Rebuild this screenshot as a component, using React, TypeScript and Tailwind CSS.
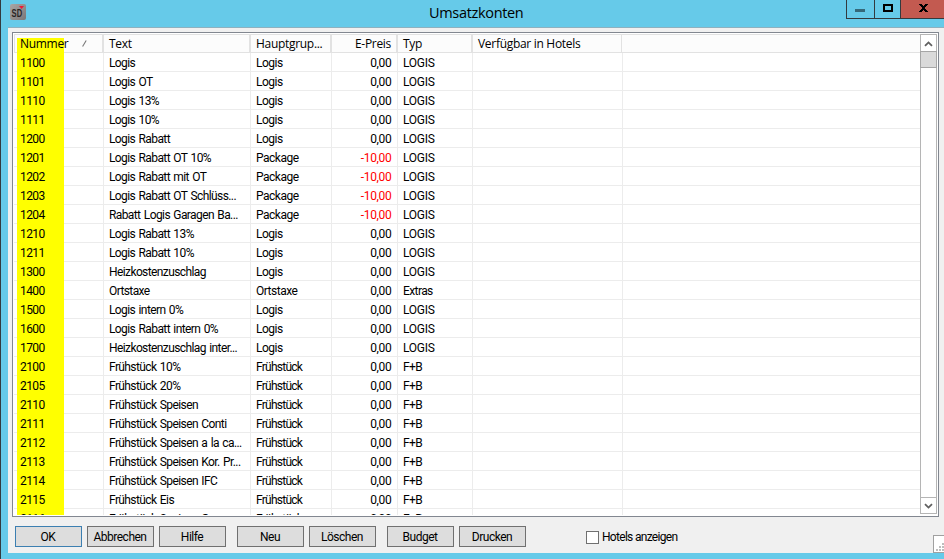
import React from 'react';

type Row = [string, string, string, string, string];

const logis = (nr: string, text: string): Row => [nr, text, 'Logis', '0,00', 'LOGIS'];
const pack = (nr: string, text: string): Row => [nr, text, 'Package', '-10,00', 'LOGIS'];
const food = (nr: string, text: string): Row => [nr, text, 'Frühstück', '0,00', 'F+B'];

const rows: Row[] = [
  logis('1100', 'Logis'),
  logis('1101', 'Logis OT'),
  logis('1110', 'Logis 13%'),
  logis('1111', 'Logis 10%'),
  logis('1200', 'Logis Rabatt'),
  pack('1201', 'Logis Rabatt OT 10%'),
  pack('1202', 'Logis Rabatt mit OT'),
  pack('1203', 'Logis Rabatt OT Schlüss...'),
  pack('1204', 'Rabatt Logis Garagen Ba...'),
  logis('1210', 'Logis Rabatt 13%'),
  logis('1211', 'Logis Rabatt 10%'),
  logis('1300', 'Heizkostenzuschlag'),
  ['1400', 'Ortstaxe', 'Ortstaxe', '0,00', 'Extras'],
  logis('1500', 'Logis intern 0%'),
  logis('1600', 'Logis Rabatt intern 0%'),
  logis('1700', 'Heizkostenzuschlag inter...'),
  food('2100', 'Frühstück 10%'),
  food('2105', 'Frühstück 20%'),
  food('2110', 'Frühstück Speisen'),
  food('2111', 'Frühstück Speisen Conti'),
  food('2112', 'Frühstück Speisen a la ca...'),
  food('2113', 'Frühstück Speisen Kor. Pr...'),
  food('2114', 'Frühstück Speisen IFC'),
  food('2115', 'Frühstück Eis'),
  food('2116', 'Frühstück Speisen G'),
];

const grid = 'grid grid-cols-[90px_147px_81px_66px_75px_150px_1fr]';
const cell = 'border-r border-[#ececec] pl-[5px] whitespace-nowrap overflow-hidden';
const head = 'border-r-2 border-[#e2e2e2] pl-[5px] whitespace-nowrap overflow-hidden';

function Button({ label, primary, className = '' }: { label: string; primary?: boolean; className?: string }) {
  return (
    <button
      className={`h-[21px] w-[67px] border bg-[#dddddd] pr-px text-center leading-[20px] ${
        primary ? 'border-[#3c7fb1]' : 'border-[#707070]'
      } ${className}`}
    >
      {label}
    </button>
  );
}

function Chevron({ down }: { down?: boolean }) {
  return (
    <svg width="9" height="6" viewBox="0 0 9 6" className={down ? 'rotate-180' : ''}>
      <path d="M1 4.8 4.5 1.4 8 4.8" fill="none" stroke="#606060" strokeWidth="1.8" />
    </svg>
  );
}

export default function App() {
  return (
    <div className="relative flex h-[559px] w-[944px] flex-col overflow-hidden border-l border-[#333a3e] bg-[#66cae9] font-['Roboto','Liberation_Sans',sans-serif] text-[12px] tracking-[-0.6px] text-black">
      <header className="flex h-[27px] shrink-0 items-start">
        <svg width="16" height="16" viewBox="0 0 16 16" className="mt-[4px] ml-[9px] shrink-0 tracking-normal">
          <defs>
            <linearGradient id="badge" x1="0" y1="0" x2="1" y2="1">
              <stop offset="0" stopColor="#aaa6a5" />
              <stop offset="1" stopColor="#7b7777" />
            </linearGradient>
          </defs>
          <rect width="16" height="16" rx="2" fill="url(#badge)" />
          <path d="M9 2h5l-2.4 3z" fill="#ed1838" />
          <text x="1.6" y="13.2" fontSize="10" fontWeight="700" fill="#292526" textLength="10.5" lengthAdjust="spacingAndGlyphs" fontFamily="Liberation Sans">
            SD
          </text>
        </svg>
        <h1 className="flex-1 pl-[403px] font-['Open_Sans',sans-serif] text-[14.5px] leading-[26px] tracking-[-0.33px]">Umsatzkonten</h1>
        <div className="flex h-[19px] w-[98px] border-b border-l border-[#333a3e]">
          <div className="flex w-[28px] justify-center border-r border-[#333a3e]">
            <span className="mt-[9px] mr-px h-[3px] w-[10px] bg-[#35697a]" />
          </div>
          <div className="flex w-[26px] justify-center border-r border-[#333a3e]">
            <span className="mt-[4px] h-[8px] w-[10px] border-2 border-black" />
          </div>
          <div className="flex flex-1 justify-center bg-[#c35a50]">
            <svg width="9" height="8" viewBox="0 0 9 8" className="mt-[4px] mr-[-2px]" shapeRendering="crispEdges">
              <path d="M0 0h3v1h1v1h1V1h1V0h3v1H8v1H7v1H6v2h1v1h1v1h1v1H6V7H5V6H4v1H3v1H0V7h1V6h1V5h1V3H2V2H1V1H0z" fill="#000" />
            </svg>
          </div>
        </div>
      </header>

      <main className="ml-[7px] flex h-[526px] shrink-0 flex-col border-t border-[#8eb1bf] bg-[#f0f0f0]">
        <section className="mt-[4px] ml-[4px] flex h-[485px] w-[927px] shrink-0 border border-[#828790] bg-white p-[1px]">
          <div className="relative flex-1 overflow-hidden">
            <div className={`${grid} h-[19px] border-t border-b border-[#e2e2e2] bg-[#fcfcfc] font-['Open_Sans',sans-serif] text-[12px] leading-[18px] tracking-[-0.3px]`}>
              <div className={`${head} flex justify-between border-l pr-[15px]`}>
                <span className="relative z-10">Nummer</span>
                <svg width="5" height="7" viewBox="0 0 5 7" className="mt-[5px]">
                  <path d="M4.2.5.6 6.5" stroke="#777" strokeWidth="1.1" />
                </svg>
              </div>
              <div className={head}>Text</div>
              <div className={head}>Hauptgrup...</div>
              <div className={`${head} pr-[5px] text-right`}>E-Preis</div>
              <div className={head}>Typ</div>
              <div className="mr-px overflow-hidden border-r border-[#e2e2e2] pl-[5px] whitespace-nowrap">Verfügbar in Hotels</div>
              <div />
            </div>
            {rows.map((r) => (
              <div key={r[0]} className={`${grid} h-[19px] border-b border-[#ececec] leading-[20px]`}>
                <div className={`${cell} !pl-[6px]`}>
                  <span className="relative z-10">{r[0]}</span>
                </div>
                <div className={`${cell} [word-spacing:1px]`}>{r[1]}</div>
                <div className={r[2] === 'Frühstück' ? `${cell} tracking-[-0.75px]` : `${cell} tracking-[-0.5px]`}>{r[2]}</div>
                <div className={`${cell} pr-[5px] text-right tracking-[-0.35px] ${r[3].startsWith('-') ? 'text-[#ff0000]' : ''}`}>
                  <span className="mr-[0.6px]">{r[3]}</span>
                </div>
                <div className={r[4] === 'LOGIS' ? `${cell} tracking-[-0.25px]` : `${cell}`}>{r[4]}</div>
                <div className={cell} />
                <div />
              </div>
            ))}
            <div className="absolute top-[4px] bottom-0 left-[3px] w-[47px] bg-[#ffff00]" />
          </div>
          <div className="mb-px flex w-[17px] shrink-0 flex-col border border-[#b5b5b5] bg-white">
            <div className="flex h-[16px] items-center justify-center pt-px">
              <Chevron />
            </div>
            <div className="mx-[-1px] h-[17px] border border-[#a6a6a6] bg-[#dadada]" />
            <div className="flex-1" />
            <div className="flex h-[16px] items-center justify-center border-t border-[#b5b5b5]">
              <Chevron down />
            </div>
          </div>
        </section>

        <footer className="flex flex-1 items-start pt-[9px] pl-[7px] tracking-[-0.5px]">
          <Button label="OK" primary />
          <Button label="Abbrechen" className="ml-[5px]" />
          <Button label="Hilfe" className="ml-[5px]" />
          <Button label="Neu" className="ml-[11px]" />
          <Button label="Löschen" className="ml-[5px]" />
          <Button label="Budget" className="ml-[11px]" />
          <Button label="Drucken" className="ml-[5px]" />
          <label className="mt-[4px] ml-[60px] flex items-center tracking-[-0.7px]">
            <span className="h-[13px] w-[13px] border border-[#707070] bg-white" />
            <span className="ml-[3px] leading-[15px]">Hotels anzeigen</span>
          </label>
          <svg width="11" height="18" viewBox="0 0 11 18" className="mt-[9px] ml-auto" shapeRendering="crispEdges">
            <path d="M0 0h11v18H0z" fill="#a0a0a0" />
            <path d="M1 1h10v16H1z" fill="#fff" />
            <path d="M9 8h2v2H9zM6 11h2v2H6zM9 11h2v2H9zM3 14h2v2H3zM6 14h2v2H6zM9 14h2v2H9z" fill="#bdbdbd" />
          </svg>
        </footer>
      </main>
    </div>
  );
}
